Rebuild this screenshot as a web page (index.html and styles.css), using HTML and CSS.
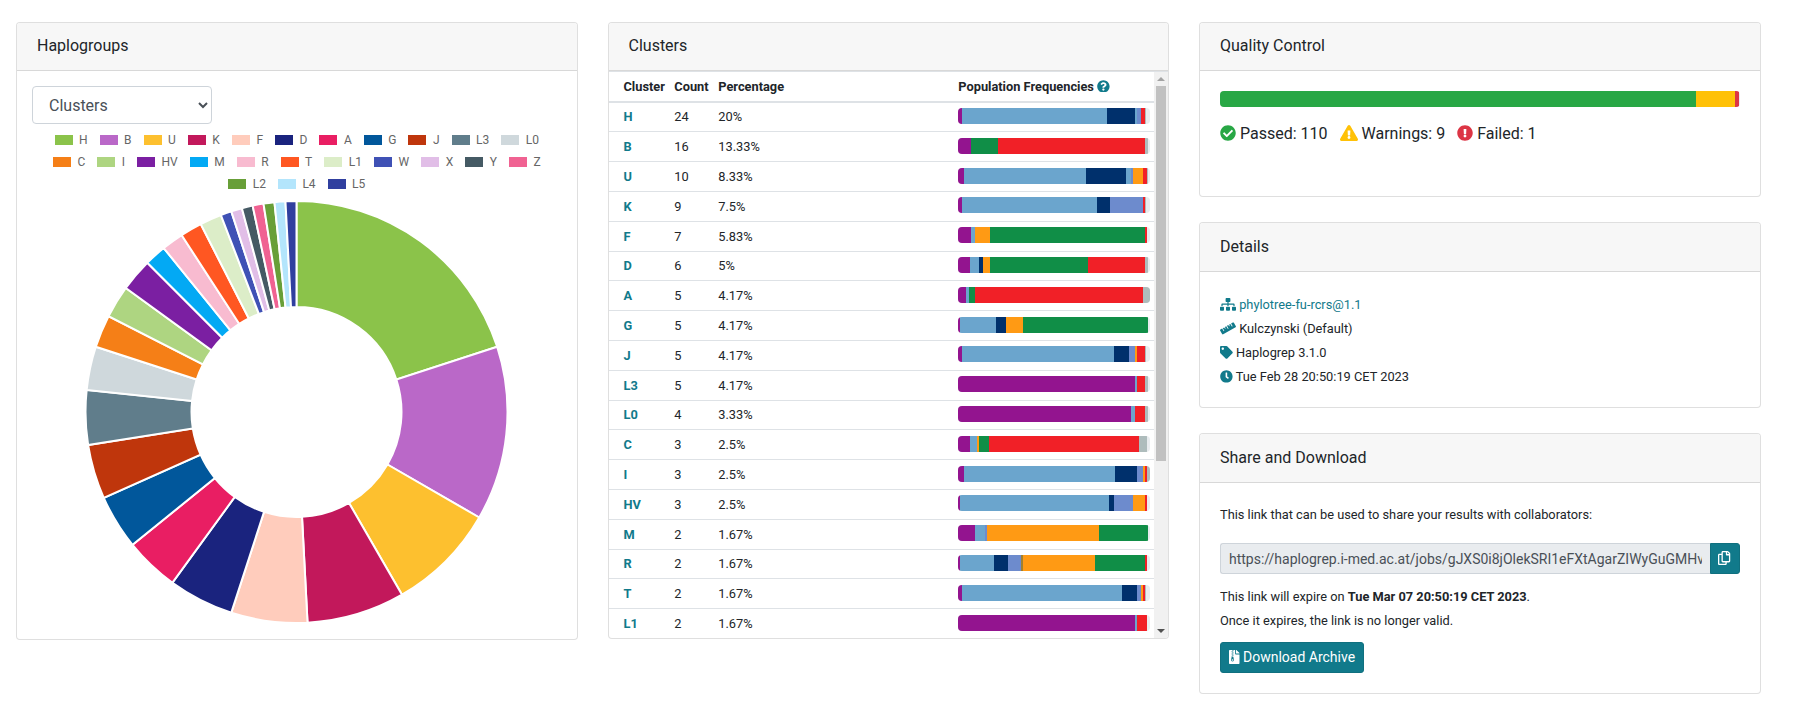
FILE: index.html
```html
<!DOCTYPE html>
<html lang="en">
<head>
  <meta charset="UTF-8" />
  <title>Haplogrep - Results</title>
  <link rel="stylesheet" href="styles.css">
</head>
<body>
  <div class="page">
    <div class="col">
      <div class="card">
        <div class="card-header">Haplogroups</div>
        <div class="chart-body">
          <select class="form-select">
            <option>Clusters</option>
            <option>Macrohaplogroups</option>
          </select>
          <div id="legend" class="legend"></div>
          <svg id="donut" class="donut" viewBox="-211.5 -212 424 424" width="424" height="424"></svg>
        </div>
      </div>
    </div>

    <div class="col">
      <div class="card">
        <div class="card-header">Clusters</div>
        <div class="table-wrap">
          <table class="cluster-table">
            <thead>
              <tr>
                <th class="col-cluster">Cluster</th>
                <th class="col-count">Count</th>
                <th class="col-percent">Percentage</th>
                <th>Population Frequencies
                  <svg class="icon icon-teal" viewBox="0 0 512 512"><path d="M504 256c0 136.997-111.043 248-248 248S8 392.997 8 256C8 119.083 119.043 8 256 8s248 111.083 248 248zM262.655 90c-54.497 0-89.255 22.957-116.549 63.758-3.536 5.286-2.353 12.415 2.715 16.258l34.699 26.31c5.205 3.947 12.621 3.008 16.665-2.122 17.864-22.658 30.113-35.797 57.303-35.797 20.429 0 45.698 13.148 45.698 32.958 0 14.976-12.363 22.667-32.534 33.976C247.128 238.528 216 254.941 216 296v4c0 6.627 5.373 12 12 12h56c6.627 0 12-5.373 12-12v-1.333c0-28.462 83.186-29.647 83.186-106.667 0-58.002-60.165-102-116.531-102zM256 338c-25.365 0-46 20.635-46 46 0 25.364 20.635 46 46 46s46-20.636 46-46c0-25.365-20.635-46-46-46z"/></svg>
                </th>
              </tr>
            </thead>
            <tbody id="cluster-rows"></tbody>
          </table>
          <div class="scrollbar">
            <div class="scroll-arrow"><span class="arrow-up"></span></div>
            <div class="scroll-thumb"></div>
            <div class="scroll-track"></div>
            <div class="scroll-arrow"><span class="arrow-down"></span></div>
          </div>
        </div>
      </div>
    </div>

    <div class="col side">
      <div class="card">
        <div class="card-header">Quality Control</div>
        <div class="card-body qc-body">
          <div class="progress">
            <div class="qc-passed"></div>
            <div class="qc-warn"></div>
            <div class="qc-failed"></div>
          </div>
          <div class="qc-stats">
            <span class="qc-stat">
              <svg class="icon text-green" viewBox="0 0 512 512"><path d="M504 256c0 136.967-111.033 248-248 248S8 392.967 8 256 119.033 8 256 8s248 111.033 248 248zM227.314 387.314l184-184c6.248-6.248 6.248-16.379 0-22.627l-22.627-22.627c-6.248-6.249-16.379-6.249-22.628 0L216 308.118l-70.059-70.059c-6.248-6.248-16.379-6.248-22.628 0l-22.627 22.627c-6.248 6.248-6.248 16.379 0 22.627l104 104c6.249 6.249 16.379 6.249 22.628.001z"/></svg>
              Passed: 110</span>
            <span class="qc-stat">
              <svg class="icon text-yellow" viewBox="0 0 576 512"><path d="M569.517 440.013C587.975 472.007 564.806 512 527.94 512H48.054c-36.937 0-59.999-40.055-41.577-71.987L246.423 23.985c18.467-32.009 64.72-31.951 83.154 0l239.94 416.028zM288 354c-25.405 0-46 20.595-46 46s20.595 46 46 46 46-20.595 46-46-20.595-46-46-46zm-43.673-165.346l7.418 136c.347 6.364 5.609 11.346 11.982 11.346h48.546c6.373 0 11.635-4.982 11.982-11.346l7.418-136c.375-6.874-5.098-12.654-11.982-12.654h-63.383c-6.884 0-12.356 5.78-11.981 12.654z"/></svg>
              Warnings: 9</span>
            <span class="qc-stat">
              <svg class="icon text-red" viewBox="0 0 512 512"><path d="M504 256c0 136.997-111.043 248-248 248S8 392.997 8 256C8 119.083 119.043 8 256 8s248 111.083 248 248zm-248 50c-25.405 0-46 20.595-46 46s20.595 46 46 46 46-20.595 46-46-20.595-46-46-46zm-43.673-165.346l7.418 136c.347 6.364 5.609 11.346 11.982 11.346h48.546c6.373 0 11.635-4.982 11.982-11.346l7.418-136c.375-6.874-5.098-12.654-11.982-12.654h-63.383c-6.884 0-12.356 5.78-11.981 12.654z"/></svg>
              Failed: 1</span>
          </div>
        </div>
      </div>

      <div class="card">
        <div class="card-header header-tall">Details</div>
        <div class="card-body small details-body">
          <div class="line">
            <svg class="icon icon-teal" viewBox="0 0 640 512"><path d="M128 352H32c-17.67 0-32 14.33-32 32v96c0 17.67 14.33 32 32 32h96c17.67 0 32-14.33 32-32v-96c0-17.67-14.33-32-32-32zm-24-80h192v48h48v-48h192v48h48v-57.59c0-21.17-17.23-38.41-38.41-38.41H344v-64h40c17.67 0 32-14.33 32-32V32c0-17.67-14.33-32-32-32H256c-17.67 0-32 14.33-32 32v96c0 17.67 14.33 32 32 32h40v64H94.41C73.23 224 56 241.23 56 262.41V320h48v-48zm264 80h-96c-17.67 0-32 14.33-32 32v96c0 17.67 14.33 32 32 32h96c17.67 0 32-14.33 32-32v-96c0-17.67-14.33-32-32-32zm240 0h-96c-17.67 0-32 14.33-32 32v96c0 17.67 14.33 32 32 32h96c17.67 0 32-14.33 32-32v-96c0-17.67-14.33-32-32-32z"/></svg>
            <a class="link" href="#">phylotree-fu-rcrs@1.1</a>
          </div>
          <div class="line">
            <svg class="icon icon-teal" viewBox="0 0 640 512"><path d="M635.7 167.2L556.1 31.7c-8.8-15-28.3-20.1-43.5-11.5l-69 39.1L503.3 161c2.2 3.8.9 8.5-2.9 10.7l-13.8 7.8c-3.8 2.2-8.7.9-10.9-2.9L416 75l-55.2 31.3 27.9 47.4c2.2 3.8.9 8.5-2.9 10.7l-13.8 7.8c-3.8 2.2-8.7.9-10.9-2.9L333.2 122 278 153.3 337.8 255c2.2 3.7.9 8.5-2.9 10.7l-13.8 7.8c-3.8 2.2-8.7.9-10.9-2.9l-59.7-101.7-55.2 31.3 27.9 47.4c2.2 3.8.9 8.5-2.9 10.7l-13.8 7.8c-3.8 2.2-8.7.9-10.9-2.9l-27.9-47.5-55.2 31.3 59.7 101.7c2.2 3.7.9 8.5-2.9 10.7l-13.8 7.8c-3.8 2.2-8.7.9-10.9-2.9L84.9 262.9l-69 39.1C.7 310.7-4.6 329.8 4.2 344.8l79.6 135.6c8.8 15 28.3 20.1 43.5 11.5L624.1 210c15.2-8.6 20.4-27.8 11.6-42.8z"/></svg>
            Kulczynski (Default)
          </div>
          <div class="line">
            <svg class="icon icon-teal" viewBox="0 0 512 512"><path d="M0 252.118V48C0 21.49 21.49 0 48 0h204.118a48 48 0 0 1 33.941 14.059l211.882 211.882c18.745 18.745 18.745 49.137 0 67.882L293.823 497.941c-18.745 18.745-49.137 18.745-67.882 0L14.059 286.059A48 48 0 0 1 0 252.118zM112 64c-26.51 0-48 21.49-48 48s21.49 48 48 48 48-21.49 48-48-21.49-48-48-48z"/></svg>
            Haplogrep 3.1.0
          </div>
          <div class="line">
            <svg class="icon icon-teal" viewBox="0 0 512 512"><path d="M256,8C119,8,8,119,8,256S119,504,256,504,504,393,504,256,393,8,256,8Zm92.49,313h0l-20,25a16,16,0,0,1-22.49,2.5h0l-67-49.72a40,40,0,0,1-15-31.23V112a16,16,0,0,1,16-16h32a16,16,0,0,1,16,16V256l58,42.5A16,16,0,0,1,348.49,321Z"/></svg>
            Tue Feb 28 20:50:19 CET 2023
          </div>
        </div>
      </div>

      <div class="card">
        <div class="card-header header-tall">Share and Download</div>
        <div class="card-body small">
          <div class="line">This link that can be used to share your results with collaborators:</div>
          <div class="input-group">
            <input class="share-input" type="text" readonly value="https://haplogrep.i-med.ac.at/jobs/gJXS0i8jOlekSRI1eFXtAgarZIWyGuGMHvQ2">
            <button class="btn btn-copy">
              <svg class="icon" viewBox="0 0 448 512"><path d="M433.941 65.941l-51.882-51.882A48 48 0 0 0 348.118 0H176c-26.51 0-48 21.49-48 48v48H48c-26.51 0-48 21.49-48 48v320c0 26.51 21.49 48 48 48h224c26.51 0 48-21.49 48-48v-48h80c26.51 0 48-21.49 48-48V99.882a48 48 0 0 0-14.059-33.941zM266 464H54a6 6 0 0 1-6-6V150a6 6 0 0 1 6-6h74v224c0 26.51 21.49 48 48 48h96v42a6 6 0 0 1-6 6zm128-96H182a6 6 0 0 1-6-6V54a6 6 0 0 1 6-6h106v88c0 13.255 10.745 24 24 24h88v202a6 6 0 0 1-6 6zm6-256h-64V48h9.632c1.591 0 3.117.632 4.243 1.757l48.368 48.368a6 6 0 0 1 1.757 4.243V112z"/></svg>
            </button>
          </div>
          <div class="line">This link will expire on <b>Tue Mar 07 20:50:19 CET 2023</b>.</div>
          <div class="line">Once it expires, the link is no longer valid.</div>
          <button class="btn btn-download">
            <svg class="icon" viewBox="0 0 384 512"><path d="M377 105L279.1 7c-4.5-4.5-10.6-7-17-7H256v128h128v-6.1c0-6.3-2.5-12.4-7-16.9zM128.4 336c-17.9 0-32.4 12.1-32.4 27 0 15 14.6 27 32.5 27s32.4-12.1 32.4-27-14.6-27-32.5-27zM224 136V0h-63.6v32h-32V0H24C10.7 0 0 10.7 0 24v464c0 13.3 10.7 24 24 24h336c13.3 0 24-10.7 24-24V160H248c-13.2 0-24-10.8-24-24zM95.9 32h32v32h-32zm32.3 384c-33.2 0-58-30.4-51.4-62.9L96.4 256v-32h32v-32h-32v-32h32v-32h-32V96h32V64h32v32h-32v32h32v32h-32v32h32v32h-32v32h22.1c5.7 0 10.7 4.1 11.8 9.7l17.3 87.7c6.4 32.4-18.4 62.6-51.4 62.6z"/></svg>
            Download Archive
          </button>
        </div>
      </div>
    </div>
  </div>

  <script src="app.js"></script>
</body>
</html>
```

FILE: styles.css
```css
* {
  box-sizing: border-box;
}

body {
  margin: 0;
  font-family: Roboto, "Liberation Sans", sans-serif;
  font-size: 16px;
  line-height: 1.5;
  color: #212529;
  background-color: #fff;
}

.page {
  display: grid;
  grid-template-columns: repeat(3, 561.5px);
  column-gap: 30px;
  align-items: start;
  padding: 22px 0 0 16px;
}

.side {
  display: flex;
  flex-direction: column;
  gap: 25px;
}

.card {
  background-color: #fff;
  border: 1px solid rgba(0, 0, 0, .125);
  border-radius: 4px;
  overflow: hidden;
}

.card-header {
  padding: 11px 20px 12px 20px;
  height: 48px;
  background-color: #f7f7f7;
  border-bottom: 1px solid rgba(0, 0, 0, .125);
}

.header-tall {
  height: 49px;
  padding-top: 12px;
}

.card-body {
  padding: 20px;
}

.details-body {
  padding: 21px 20px 18px 20px;
}

.small {
  font-size: 12.8px;
}

.line {
  line-height: 24px;
}

.icon {
  display: inline-block;
  height: 1em;
  fill: currentColor;
  vertical-align: -.125em;
}

.icon-teal {
  color: #117a8b;
}

.link {
  color: #117a8b;
  text-decoration: none;
}

/* haplogroup chart */
.chart-body {
  padding: 15px;
  display: flex;
  flex-direction: column;
}

.form-select {
  width: 180px;
  height: 38px;
  padding: 6px 12px;
  font-family: inherit;
  font-size: 16px;
  color: #495057;
  background-color: #fff;
  border: 1px solid #ced4da;
  border-radius: 4px;
}

.legend {
  margin-top: 5px;
}

.legend-row {
  display: flex;
  justify-content: center;
  align-items: center;
  gap: 12px;
  height: 22px;
}

.legend-item {
  display: flex;
  align-items: center;
  gap: 6.5px;
  font-size: 12px;
  line-height: 12px;
  color: #666;
}

.legend-box {
  width: 18px;
  height: 10px;
}

.donut {
  display: block;
  margin: 5px auto 0 auto;
}

/* cluster table */
.table-wrap {
  display: flex;
  border-top: 1px solid #dee2e6;
}

.cluster-table {
  width: 545px;
  table-layout: fixed;
  border-collapse: collapse;
  font-size: 12.8px;
}

.cluster-table th,
.cluster-table td {
  padding: 4.8px;
  line-height: 19.2px;
  text-align: left;
}

.cluster-table th {
  padding-bottom: 4.65px;
  font-weight: 700;
  border-bottom: 2px solid #dee2e6;
}

.cluster-table td {
  border-top: 1px solid #dee2e6;
}

.cluster-table th:first-child,
.cluster-table td:first-child {
  padding-left: 15px;
}

.cluster-table td:last-child {
  padding-right: 3.8px;
}

.col-cluster {
  width: 61px;
}

.col-count {
  width: 44px;
}

.col-percent {
  width: 240px;
}

.cluster-link {
  font-weight: 700;
  color: #117a8b;
  text-decoration: none;
}

.bar {
  display: flex;
  height: 16px;
  margin: -1px 0 1px 0;
  overflow: hidden;
  background-color: #e9ecef;
  border-radius: 4px;
}

.seg-p { background-color: #93148f; }
.seg-b { background-color: #6ba5cd; }
.seg-n { background-color: #00306c; }
.seg-e { background-color: #6d8bcd; }
.seg-o { background-color: #ff9a14; }
.seg-v { background-color: #a08030; }
.seg-g { background-color: #108e47; }
.seg-r { background-color: #f12027; }
.seg-s { background-color: #aebcbc; }

.scrollbar {
  flex: 1;
  display: flex;
  flex-direction: column;
  background-color: #f1f1f1;
}

.scroll-arrow {
  height: 14px;
  display: flex;
  align-items: center;
  justify-content: center;
}

.scroll-thumb {
  height: 375px;
  margin: 0 2px;
  background-color: #c1c1c1;
}

.scroll-track {
  flex: 1;
}

.arrow-up,
.arrow-down {
  width: 0;
  height: 0;
  border-left: 4px solid transparent;
  border-right: 4px solid transparent;
}

.arrow-up {
  border-bottom: 4px solid #a3a3a3;
}

.arrow-down {
  border-top: 4px solid #505050;
}

/* quality control */
.qc-body {
  height: 125px;
}

.progress {
  display: flex;
  height: 16px;
  overflow: hidden;
  background-color: #e9ecef;
  border-radius: 4px;
}

.qc-passed {
  width: 91.67%;
  background-color: #28a745;
}

.qc-warn {
  width: 7.5%;
  background-color: #ffc107;
}

.qc-failed {
  width: .83%;
  background-color: #dc3545;
}

.qc-stats {
  display: flex;
  gap: 12px;
  margin-top: 15px;
}

.text-green { color: #28a745; }
.text-yellow { color: #ffc107; }
.text-red { color: #dc3545; }

/* share box */
.input-group {
  display: flex;
  margin: 16px 0 11px 0;
}

.share-input {
  flex: 1;
  min-width: 0;
  height: 31px;
  padding: 4px 8px;
  font-family: inherit;
  font-size: 14px;
  color: #495057;
  background-color: #e9ecef;
  border: 1px solid #ced4da;
  border-right: none;
  border-radius: 3px 0 0 3px;
  outline: none;
}

.btn {
  height: 31px;
  font-family: inherit;
  font-size: 14px;
  line-height: 21px;
  color: #fff;
  background-color: #117a8b;
  border: 1px solid #10707f;
  border-radius: 3px;
}

.btn-copy {
  width: 30px;
  padding: 0;
  border-radius: 0 3px 3px 0;
}

.btn-download {
  display: block;
  width: 144px;
  margin-top: 9px;
  padding: 4px 8px;
  white-space: nowrap;
}
```

FILE: app.js
```js
const clusters = [
  ['H', 24, '20%', '#8bc34a', [['p', 2], ['b', 75.8], ['n', 14.6], ['b', 1], ['e', 2], ['r', 2.2], ['s', .4]]],
  ['B', 16, '13.33%', '#ba68c8', [['p', 6.4], ['b', .4], ['g', 13.8], ['r', 77], ['s', 1.6]]],
  ['U', 10, '8.33%', '#fdc02f', [['p', 3], ['b', 63.8], ['n', 21], ['b', 2.6], ['e', 1], ['o', 5.2], ['r', 2], ['s', .4]]],
  ['K', 9, '7.5%', '#c2185b', [['p', 2], ['b', 70.6], ['n', 6.8], ['e', 17.2], ['r', 1], ['s', .4]]],
  ['F', 7, '5.83%', '#ffccbc', [['p', 6.8], ['b', 2], ['o', 7.8], ['g', 81], ['r', 1]]],
  ['D', 6, '5%', '#1a237e', [['p', 6.2], ['b', 4.6], ['n', 2.2], ['o', 3.6], ['g', 51.4], ['r', 29.6], ['s', 1.6]]],
  ['A', 5, '4.17%', '#e91e63', [['p', 4], ['b', 1.6], ['g', 3], ['r', 88], ['s', 3.4]]],
  ['G', 5, '4.17%', '#01579b', [['p', 1], ['b', 18.8], ['n', 5.2], ['o', 8.8], ['g', 65.4]]],
  ['J', 5, '4.17%', '#bf360c', [['p', 2], ['b', 79.4], ['n', 7.8], ['e', 3.2], ['o', 1], ['r', 4.2], ['s', .4]]],
  ['L3', 5, '4.17%', '#607d8b', [['p', 92.4], ['b', 1], ['r', 4.2], ['s', 1.6]]],
  ['L0', 4, '3.33%', '#cfd8dc', [['p', 90.4], ['b', 2], ['r', 5.2], ['s', 1.6]]],
  ['C', 3, '2.5%', '#f57f17', [['p', 6.2], ['b', 3.6], ['o', 1], ['g', 5.4], ['r', 78.4], ['s', 4]]],
  ['I', 3, '2.5%', '#aed581', [['p', 3], ['b', 79], ['n', 11.4], ['e', 3.2], ['o', 1], ['r', 1], ['s', 1.4]]],
  ['HV', 3, '2.5%', '#7b1fa2', [['p', 1], ['b', 77.8], ['n', 2.6], ['e', 10], ['o', 6.2], ['r', 1]]],
  ['M', 2, '1.67%', '#03a9f4', [['p', 8.8], ['b', 5.2], ['e', 1], ['o', 58.6], ['g', 25.6]]],
  ['R', 2, '1.67%', '#f8bbd0', [['p', 1], ['b', 17.8], ['n', 7.2], ['e', 6.8], ['v', 1], ['o', 37.8], ['g', 26], ['r', 1]]],
  ['T', 2, '1.67%', '#ff5722', [['p', 2], ['b', 83.6], ['n', 7.8], ['e', 2.2], ['o', 1], ['r', 1], ['s', .4]]],
  ['L1', 2, '1.67%', '#dcedc8', [['p', 92.4], ['b', 1], ['r', 5.2]]],
  ['W', 1, '0.83%', '#3f51b5', []],
  ['X', 1, '0.83%', '#e1bee7', []],
  ['Y', 1, '0.83%', '#455a64', []],
  ['Z', 1, '0.83%', '#f06292', []],
  ['L2', 1, '0.83%', '#689f38', []],
  ['L4', 1, '0.83%', '#b3e5fc', []],
  ['L5', 1, '0.83%', '#303f9f', []]
];

function renderLegend() {
  const legend = document.getElementById('legend');
  [[0, 11], [11, 22], [22, 25]].forEach(([from, to]) => {
    const row = document.createElement('div');
    row.className = 'legend-row';
    clusters.slice(from, to).forEach(c => {
      const item = document.createElement('div');
      item.className = 'legend-item';
      const box = document.createElement('span');
      box.className = 'legend-box';
      box.style.backgroundColor = c[3];
      item.appendChild(box);
      item.appendChild(document.createTextNode(c[0]));
      row.appendChild(item);
    });
    legend.appendChild(row);
  });
}

function point(r, angle) {
  return `${(r * Math.sin(angle)).toFixed(2)} ${(-r * Math.cos(angle)).toFixed(2)}`;
}

function renderDonut() {
  const svg = document.getElementById('donut');
  const total = clusters.reduce((sum, c) => sum + c[1], 0);
  const outer = 211;
  const inner = 105;
  let angle = 0;
  clusters.forEach(c => {
    const next = angle + c[1] / total * Math.PI * 2;
    const large = next - angle > Math.PI ? 1 : 0;
    const path = document.createElementNS('http://www.w3.org/2000/svg', 'path');
    path.setAttribute('d', `M${point(outer, angle)} A${outer} ${outer} 0 ${large} 1 ${point(outer, next)} L${point(inner, next)} A${inner} ${inner} 0 ${large} 0 ${point(inner, angle)} Z`);
    path.setAttribute('fill', c[3]);
    path.setAttribute('stroke', '#fff');
    path.setAttribute('stroke-width', '2');
    svg.appendChild(path);
    angle = next;
  });
}

function renderTable() {
  const rows = document.getElementById('cluster-rows');
  clusters.filter(c => c[4].length).forEach(c => {
    const tr = document.createElement('tr');
    const segments = c[4].map(([color, width]) => `<div class="seg-${color}" style="width:${width}%"></div>`).join('');
    tr.innerHTML = `<td><a class="cluster-link" href="#">${c[0]}</a></td><td>${c[1]}</td><td>${c[2]}</td><td><div class="bar">${segments}</div></td>`;
    rows.appendChild(tr);
  });
}

renderLegend();
renderDonut();
renderTable();
```
